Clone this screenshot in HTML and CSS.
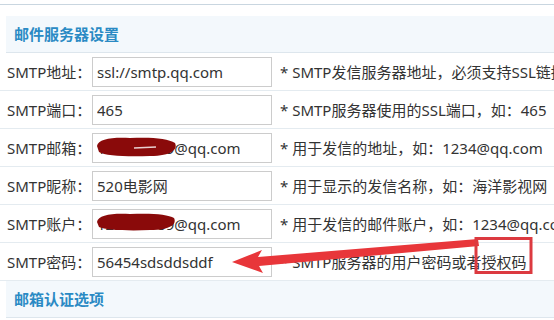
FILE: index.html
```html
<!DOCTYPE html>
<html lang="zh-CN">
<head>
  <meta charset="UTF-8" />
  <title>邮件服务器设置</title>
  <link rel="stylesheet" href="styles.css">
</head>
<body>
  <div class="panel">
    <div class="section-title">邮件服务器设置</div>

    <div class="row">
      <label class="label">SMTP地址：</label>
      <input class="field" type="text" value="ssl://smtp.qq.com" />
      <span class="tip">* SMTP发信服务器地址，必须支持SSL链接</span>
    </div>
    <div class="row">
      <label class="label">SMTP端口：</label>
      <input class="field" type="text" value="465" />
      <span class="tip">* SMTP服务器使用的SSL端口，如：465</span>
    </div>
    <div class="row">
      <label class="label">SMTP邮箱：</label>
      <input class="field" type="text" value="123456789@qq.com" />
      <span class="tip">* 用于发信的地址，如：1234@qq.com</span>
    </div>
    <div class="row">
      <label class="label">SMTP昵称：</label>
      <input class="field" type="text" value="520电影网" />
      <span class="tip">* 用于显示的发信名称，如：海洋影视网</span>
    </div>
    <div class="row">
      <label class="label">SMTP账户：</label>
      <input class="field" type="text" value="123456789@qq.com" />
      <span class="tip">* 用于发信的邮件账户，如：1234@qq.com</span>
    </div>
    <div class="row">
      <label class="label">SMTP密码：</label>
      <input class="field" type="text" value="56454sdsddsddf" />
      <span class="tip">* SMTP服务器的用户密码或者授权码</span>
    </div>

    <div class="section-title">邮箱认证选项</div>

    <!-- hand-drawn marks on top of the screenshot -->
    <svg class="marks" width="554" height="320" viewBox="0 0 554 320">
      <path d="M97 146 C98 139 112 137 130 138 C150 137 168 138 175 143 C178 149 172 156 150 156 C128 157 105 156 99 152 Z" fill="#8a0a0a"/>
      <path d="M134 148 L156 147" stroke="#e9d0d0" stroke-width="1.5"/>
      <path d="M97 222 C98 215 112 213 130 214 C150 213 168 214 174 218 C177 224 171 230 150 230 C128 231 105 230 99 227 Z" fill="#8a0a0a"/>
      <polygon points="232,262 262,250 258,257 478,239 479,246 259,266 263,273" fill="#e8363a"/>
      <rect x="476" y="238.5" width="55" height="34" fill="none" stroke="#dc3a40" stroke-width="3"/>
    </svg>
  </div>
</body>
</html>
```

FILE: styles.css
```css
body {
  margin: 0;
  padding-top: 4px;
  background: #fff;
  font-family: "Noto Sans", "Noto Sans CJK SC", sans-serif;
  font-size: 15px;
  color: #333;
}

.panel {
  position: relative;
  border-top: 1px solid #c9d6e0;
  padding-top: 11px;
  overflow: hidden;
}

.section-title {
  margin-left: 6px;
  height: 36px;
  line-height: 36px;
  padding-left: 8px;
  background: #f3f8fc;
  border-bottom: 1px solid #dde6ed;
  color: #2a8ac4;
  font-weight: bold;
  font-size: 15px;
}

.row {
  display: flex;
  align-items: center;
  height: 37px;
  border-bottom: 1px solid #e4ebf0;
  white-space: nowrap;
}

.label {
  width: 85px;
  padding-left: 7px;
  flex-shrink: 0;
}

.field {
  width: 170px;
  height: 28px;
  padding: 0 4px;
  margin: 0;
  border: 1px solid #ccc;
  font-family: inherit;
  font-size: 15px;
  color: #333;
  flex-shrink: 0;
}

.tip {
  margin-left: 8px;
}

.marks {
  position: absolute;
  top: -5px;
  left: 0;
  pointer-events: none;
}
```
